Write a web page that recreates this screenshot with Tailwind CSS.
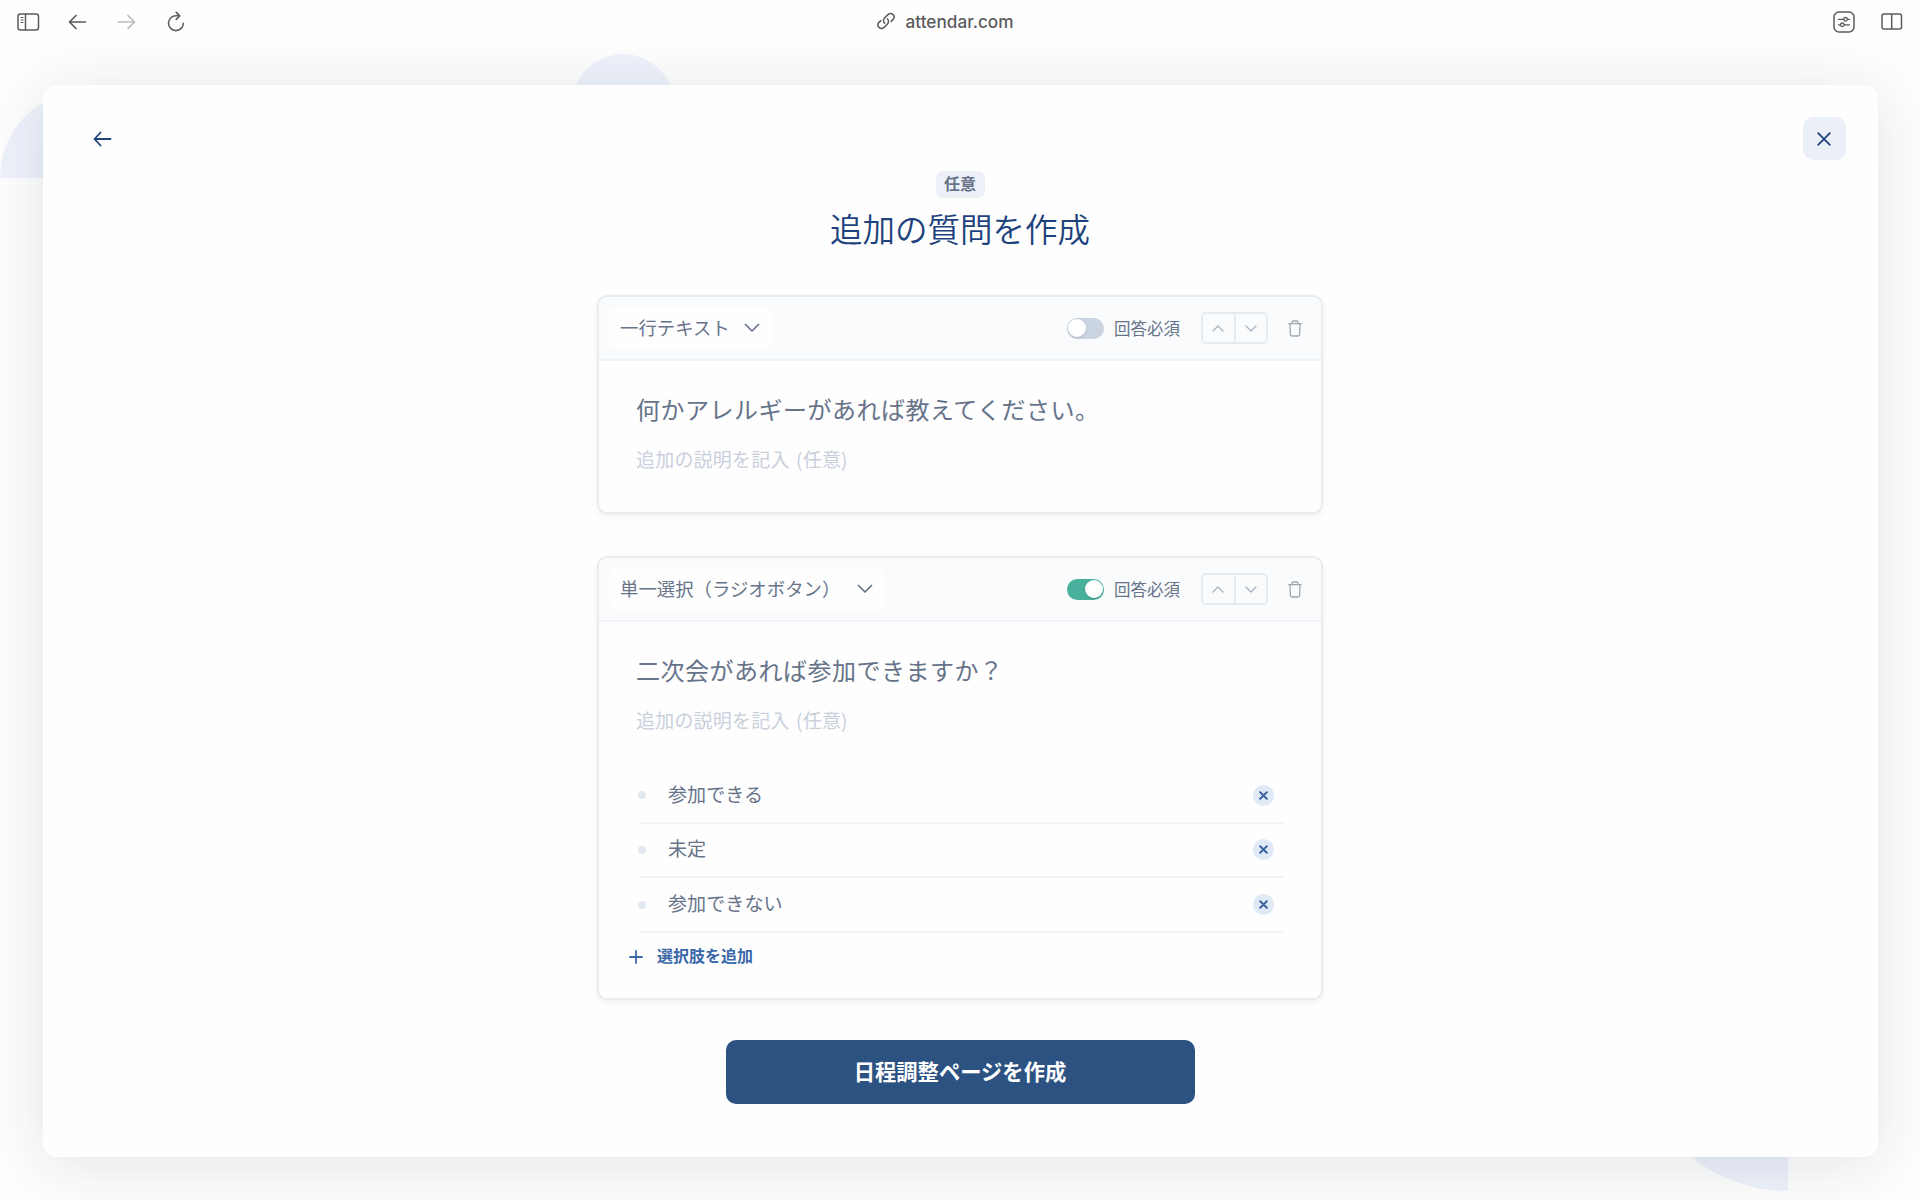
<!DOCTYPE html>
<html lang="ja">
<head>
    <meta charset="UTF-8">
    <meta name="viewport" content="width=device-width, initial-scale=1.0">
    <title>追加の質問を作成 - attendar.com</title>
    <script src="https://cdn.jsdelivr.net/npm/@tailwindcss/browser@4"></script>
</head>
<body class="relative h-[1200px] w-[1920px] overflow-hidden bg-[#fefefe] font-['Noto_Sans_CJK_JP',sans-serif] text-[#667389]">
    <!-- 背景の装飾 -->
    <div class="absolute left-0 top-[90px] h-[88px] w-[88px] rounded-tl-full bg-[#eef2fb]"></div>
    <div class="absolute left-[572px] top-[54px] h-[102px] w-[102px] rounded-full bg-[#eef2fb]"></div>
    <div class="absolute left-[1633px] top-[1036px] h-[155px] w-[155px] rounded-bl-full bg-[#eef2fb]"></div>

    <div class="relative flex h-full flex-col">
        <!-- ブラウザのツールバー -->
        <header class="relative z-10 flex h-[43px] items-center bg-[#fefefe] text-[#5c5c5e]">
            <div class="flex flex-1 items-center pl-[17px]">
                <svg class="h-[18px] w-[23px]" viewBox="0 0 23 18" fill="none" stroke="currentColor" stroke-width="1.5" stroke-linecap="round">
                    <rect x="1" y="1" width="20.5" height="16" rx="2.5"/>
                    <path d="M8.5 1v16"/>
                    <path d="M4 4.5h2M4 7h2M4 9.5h2" stroke-width="1.1"/>
                </svg>
                <svg class="ml-7 h-4 w-[19px]" viewBox="0 0 19 16" fill="none" stroke="currentColor" stroke-width="1.7" stroke-linecap="round" stroke-linejoin="round">
                    <path d="M17.5 8H1.5M8 1.5L1.5 8L8 14.5"/>
                </svg>
                <svg class="ml-[30px] h-4 w-[19px] text-[#b9b9ba]" viewBox="0 0 19 16" fill="none" stroke="currentColor" stroke-width="1.7" stroke-linecap="round" stroke-linejoin="round">
                    <path d="M1.5 8H17.5M11 1.5L17.5 8L11 14.5"/>
                </svg>
                <svg class="ml-[31px] h-[21px] w-[18px]" viewBox="0 0 18 21" fill="none" stroke="currentColor" stroke-width="1.6" stroke-linecap="round" stroke-linejoin="round">
                    <path d="M16.3 12.2A7.4 7.4 0 1 1 8.9 4.8H12.2"/>
                    <path d="M9.2 1.4L12.7 4.9L9.2 8.4"/>
                </svg>
            </div>
            <div class="mr-[30px] flex items-center gap-[11px]">
                <svg class="h-[18px] w-[18px]" viewBox="0 0 18 18" fill="none" stroke="currentColor" stroke-width="1.5" stroke-linecap="round" stroke-linejoin="round">
                    <path d="M7.6 11.2A3.6 3.6 0 0 1 7.5 6.1L11.2 2.4A3.55 3.55 0 0 1 16.2 7.4L14.2 9.4"/>
                    <path d="M10.4 6.8A3.6 3.6 0 0 1 10.5 11.9L6.8 15.6A3.55 3.55 0 0 1 1.8 10.6L3.8 8.6"/>
                </svg>
                <span class="font-['Inter'] text-[17.2px] font-medium">attendar.com</span>
            </div>
            <div class="flex flex-1 items-center justify-end pr-[17px]">
                <svg class="h-[22px] w-[22px]" viewBox="0 0 22 22" fill="none" stroke="currentColor" stroke-width="1.5" stroke-linecap="round">
                    <rect x="1" y="1" width="20" height="20" rx="5"/>
                    <path d="M5.5 8.3h5M14.5 8.3h2M5.5 13.8h1.8M11.3 13.8h5.2" stroke-width="1.3"/>
                    <circle cx="12.5" cy="8.3" r="1.8" stroke-width="1.3"/>
                    <circle cx="9.3" cy="13.8" r="1.8" stroke-width="1.3"/>
                </svg>
                <svg class="ml-[26px] h-[17px] w-[22px]" viewBox="0 0 22 17" fill="none" stroke="currentColor" stroke-width="1.5">
                    <rect x="1" y="1" width="19.5" height="15" rx="2"/>
                    <path d="M10.7 1v15"/>
                </svg>
            </div>
        </header>

        <!-- モーダル -->
        <main class="relative mx-[42.5px] mt-[42px] flex h-[1072px] flex-col items-center rounded-[14px] bg-[#fefefe] shadow-[0_8px_64px_rgba(20,30,50,0.12)]">
            <div class="flex h-[86px] w-full items-start justify-between pl-[50px] pr-8 pt-8">
                <button class="flex h-[43px] items-center text-[#1f437d]">
                    <svg class="h-4 w-[19px]" viewBox="0 0 19 16" fill="none" stroke="currentColor" stroke-width="1.8" stroke-linecap="round" stroke-linejoin="round">
                        <path d="M17.5 8H1.5M7.5 1.5L1.5 8L7.5 14.5"/>
                    </svg>
                </button>
                <button class="flex h-[43px] w-[43px] items-center justify-center rounded-[10px] bg-[#ebeff7] text-[#1f437d]">
                    <svg class="h-[14px] w-[14px]" viewBox="0 0 14 14" fill="none" stroke="currentColor" stroke-width="1.8" stroke-linecap="round">
                        <path d="M1.2 1.2L12.8 12.8M12.8 1.2L1.2 12.8"/>
                    </svg>
                </button>
            </div>

            <span class="flex h-[27px] w-[49px] items-center justify-center rounded-[7px] bg-[#edf0f7] pb-[3px] text-base font-bold leading-none">任意</span>
            <h1 class="mt-[6px] text-[32.5px] font-[350] leading-[48px] text-[#1f437d]">追加の質問を作成</h1>

            <!-- 質問 1: 一行テキスト -->
            <section class="mt-[43px] h-[219px] w-[726px] overflow-hidden rounded-[10px] border-2 border-[#e8ecf1] shadow-[0_2px_5px_rgba(100,116,139,0.1)]">
                <div class="flex h-[64px] items-center border-b-2 border-[#eff2f6] bg-[#fafbfd] pl-[10px] pr-[19px]">
                    <button class="flex h-[42px] items-center rounded-lg bg-[#fefefe] px-[11px] text-[18.4px]">
                        一行テキスト
                        <svg class="ml-[14px] mr-px h-[10px] w-4" viewBox="0 0 16 10" fill="none" stroke="currentColor" stroke-width="1.7" stroke-linecap="round" stroke-linejoin="round"><path d="M1.5 1.5L8 8L14.5 1.5"/></svg>
                    </button>
                    <span class="ml-auto flex h-[21px] w-[37px] items-center rounded-full bg-[#cbd5e1] px-px"><span class="h-[18px] w-[18px] rounded-full bg-white shadow"></span></span>
                    <span class="ml-[10px] text-[16.5px]">回答必須</span>
                    <div class="ml-[21px] flex h-8 w-[67px] divide-x-2 divide-[#e6eaf1] rounded-[5px] border-2 border-[#e6eaf1] text-[#a9b1bf]">
                        <span class="flex flex-1 items-center justify-center"><svg class="h-[7px] w-3" viewBox="0 0 12 7" fill="none" stroke="currentColor" stroke-width="1.3" stroke-linecap="round" stroke-linejoin="round"><path d="M1 6L6 1L11 6"/></svg></span>
                        <span class="flex flex-1 items-center justify-center"><svg class="h-[7px] w-3" viewBox="0 0 12 7" fill="none" stroke="currentColor" stroke-width="1.3" stroke-linecap="round" stroke-linejoin="round"><path d="M1 1L6 6L11 1"/></svg></span>
                    </div>
                    <svg class="ml-5 h-[17px] w-[14px] text-[#a0a7b3]" viewBox="0 0 14 17" fill="none" stroke="currentColor" stroke-width="1.3" stroke-linecap="round" stroke-linejoin="round">
                        <path d="M.8 3.7H13.2M2 3.7L2.4 14.5Q2.5 16 4 16H10Q11.5 16 11.6 14.5L12 3.7M4 3.5V2.2Q4 1 5.2 1H8.8Q10 1 10 2.2V3.5"/>
                    </svg>
                </div>
                <div class="pl-[37px] pr-9 pt-[30px]">
                    <p class="text-[24px] leading-9 tracking-[0.5px]">何かアレルギーがあれば教えてください。</p>
                    <p class="mt-[18px] text-[19px] leading-7 tracking-[0.2px] text-[#c9d0dc] [word-spacing:2px]">追加の説明を記入 (任意)</p>
                </div>
            </section>

            <!-- 質問 2: 単一選択 -->
            <section class="mt-[42px] h-[444px] w-[726px] overflow-hidden rounded-[10px] border-2 border-[#e8ecf1] shadow-[0_2px_5px_rgba(100,116,139,0.1)]">
                <div class="flex h-[64px] items-center border-b-2 border-[#eff2f6] bg-[#fafbfd] pl-[10px] pr-[19px]">
                    <button class="flex h-[42px] items-center rounded-lg bg-[#fefefe] px-[11px] text-[18.4px]">
                        単一選択（ラジオボタン）
                        <svg class="ml-[17px] mr-px h-[10px] w-4" viewBox="0 0 16 10" fill="none" stroke="currentColor" stroke-width="1.7" stroke-linecap="round" stroke-linejoin="round"><path d="M1.5 1.5L8 8L14.5 1.5"/></svg>
                    </button>
                    <span class="ml-auto flex h-[21px] w-[37px] items-center justify-end rounded-full bg-[#48b09d] px-px"><span class="h-[18px] w-[18px] rounded-full bg-white shadow"></span></span>
                    <span class="ml-[10px] text-[16.5px]">回答必須</span>
                    <div class="ml-[21px] flex h-8 w-[67px] divide-x-2 divide-[#e6eaf1] rounded-[5px] border-2 border-[#e6eaf1] text-[#a9b1bf]">
                        <span class="flex flex-1 items-center justify-center"><svg class="h-[7px] w-3" viewBox="0 0 12 7" fill="none" stroke="currentColor" stroke-width="1.3" stroke-linecap="round" stroke-linejoin="round"><path d="M1 6L6 1L11 6"/></svg></span>
                        <span class="flex flex-1 items-center justify-center"><svg class="h-[7px] w-3" viewBox="0 0 12 7" fill="none" stroke="currentColor" stroke-width="1.3" stroke-linecap="round" stroke-linejoin="round"><path d="M1 1L6 6L11 1"/></svg></span>
                    </div>
                    <svg class="ml-5 h-[17px] w-[14px] text-[#a0a7b3]" viewBox="0 0 14 17" fill="none" stroke="currentColor" stroke-width="1.3" stroke-linecap="round" stroke-linejoin="round">
                        <path d="M.8 3.7H13.2M2 3.7L2.4 14.5Q2.5 16 4 16H10Q11.5 16 11.6 14.5L12 3.7M4 3.5V2.2Q4 1 5.2 1H8.8Q10 1 10 2.2V3.5"/>
                    </svg>
                </div>
                <div class="pl-[37px] pr-9 pt-[30px]">
                    <p class="text-[24px] leading-9 tracking-[0.5px]">二次会があれば参加できますか？</p>
                    <p class="mt-[18px] text-[19px] leading-7 tracking-[0.2px] text-[#c9d0dc] [word-spacing:2px]">追加の説明を記入 (任意)</p>
                    <ul class="ml-[3px] mr-[2px] mt-[35px] text-[19.1px]">
                        <li class="flex h-[54.67px] items-center border-b-2 border-[#f1f3f5] pr-[9px]">
                            <span class="-ml-px h-2 w-2 rounded-full bg-[#e2e8f0]"></span>
                            <span class="ml-[22px] flex-1 pb-[3px]">参加できる</span>
                            <span class="flex h-[21px] w-[21px] items-center justify-center rounded-full bg-[#e0eaf7] text-[#3b649f]"><svg class="h-[9px] w-[9px]" viewBox="0 0 9 9" stroke="currentColor" stroke-width="2" stroke-linecap="round"><path d="M1.2 1.2L7.8 7.8M7.8 1.2L1.2 7.8"/></svg></span>
                        </li>
                        <li class="flex h-[54.67px] items-center border-b-2 border-[#f1f3f5] pr-[9px]">
                            <span class="-ml-px h-2 w-2 rounded-full bg-[#e2e8f0]"></span>
                            <span class="ml-[22px] flex-1 pb-[3px]">未定</span>
                            <span class="flex h-[21px] w-[21px] items-center justify-center rounded-full bg-[#e0eaf7] text-[#3b649f]"><svg class="h-[9px] w-[9px]" viewBox="0 0 9 9" stroke="currentColor" stroke-width="2" stroke-linecap="round"><path d="M1.2 1.2L7.8 7.8M7.8 1.2L1.2 7.8"/></svg></span>
                        </li>
                        <li class="flex h-[54.67px] items-center border-b-2 border-[#f1f3f5] pr-[9px]">
                            <span class="-ml-px h-2 w-2 rounded-full bg-[#e2e8f0]"></span>
                            <span class="ml-[22px] flex-1 pb-[3px]">参加できない</span>
                            <span class="flex h-[21px] w-[21px] items-center justify-center rounded-full bg-[#e0eaf7] text-[#3b649f]"><svg class="h-[9px] w-[9px]" viewBox="0 0 9 9" stroke="currentColor" stroke-width="2" stroke-linecap="round"><path d="M1.2 1.2L7.8 7.8M7.8 1.2L1.2 7.8"/></svg></span>
                        </li>
                    </ul>
                    <button class="-ml-[7px] mt-3 flex h-6 items-center gap-[14px] text-base font-bold leading-none text-[#3a68a8]">
                        <svg class="h-[14px] w-[14px]" viewBox="0 0 14 14" stroke="currentColor" stroke-width="1.8" stroke-linecap="round"><path d="M7 1V13M1 7H13"/></svg>
                        <span class="pb-[3px]">選択肢を追加</span>
                    </button>
                </div>
            </section>

            <button class="mt-10 flex h-16 w-[469px] items-center justify-center rounded-[10px] bg-[#2c5282] pb-[3px] text-[21.3px] font-bold text-white">日程調整ページを作成</button>
        </main>
    </div>
</body>
</html>
